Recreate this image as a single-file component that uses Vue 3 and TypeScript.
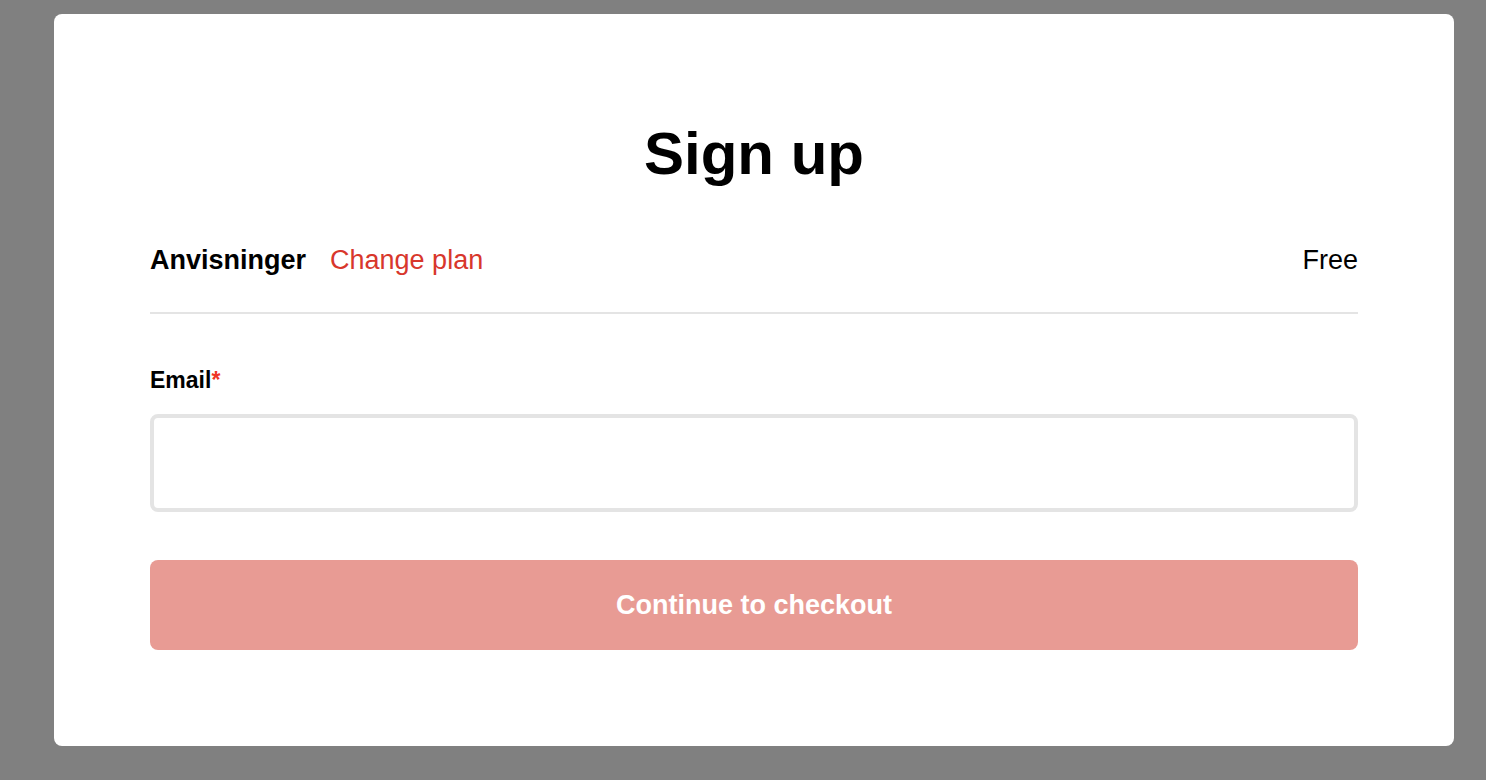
<script setup lang="ts">
import { ref } from 'vue'

const planName = 'Anvisninger'
const price = 'Free'
const email = ref('')
</script>

<template>
  <div class="overlay">
    <main class="dialog">
      <h1 class="title">Sign up</h1>
      <div class="plan">
        <strong class="plan-name">{{ planName }}</strong>
        <a class="plan-change" href="#plans">Change plan</a>
        <span class="plan-price">{{ price }}</span>
      </div>
      <form class="form" @submit.prevent>
        <label class="label" for="email">Email<span class="required">*</span></label>
        <input id="email" v-model="email" class="input" type="email" required />
        <button class="submit" type="submit" :disabled="!email">Continue to checkout</button>
      </form>
    </main>
  </div>
</template>

<style>
body {
  background: #808080;
}
</style>

<style scoped>
.overlay {
  box-sizing: border-box;
  min-height: 100vh;
  padding: 14px 32px 34px 54px;
  background: #808080;
  color: #000;
  font-family: "Liberation Sans", Arial, sans-serif;
}

.dialog {
  padding: 96px;
  border-radius: 8px;
  background: #fff;
}

.title {
  margin: 0;
  font-size: 60px;
  font-weight: 700;
  line-height: 88px;
  text-align: center;
}

.plan {
  display: flex;
  align-items: center;
  gap: 24px;
  margin-top: 38px;
  padding-bottom: 28px;
  border-bottom: 2px solid #e4e4e4;
  font-size: 27px;
  line-height: 48px;
}

.plan-name {
  font-weight: 700;
}

.plan-change {
  color: #d8372c;
  text-decoration: none;
}

.plan-price {
  margin-left: auto;
}

.form {
  display: flex;
  flex-direction: column;
  margin-top: 48px;
}

.label {
  font-size: 23px;
  font-weight: 700;
  line-height: 36px;
}

.required {
  color: #ee3524;
}

.input {
  box-sizing: border-box;
  width: 100%;
  height: 98px;
  margin: 16px 0 48px;
  padding: 0 28px;
  border: 4px solid #e4e4e4;
  border-radius: 8px;
  outline: none;
  background: #fff;
  font: inherit;
  font-size: 27px;
}

.submit {
  height: 90px;
  padding: 0 32px;
  border: 0;
  border-radius: 8px;
  background: #e89b94;
  color: #fff;
  font-family: inherit;
  font-size: 27px;
  font-weight: 700;
}
</style>
